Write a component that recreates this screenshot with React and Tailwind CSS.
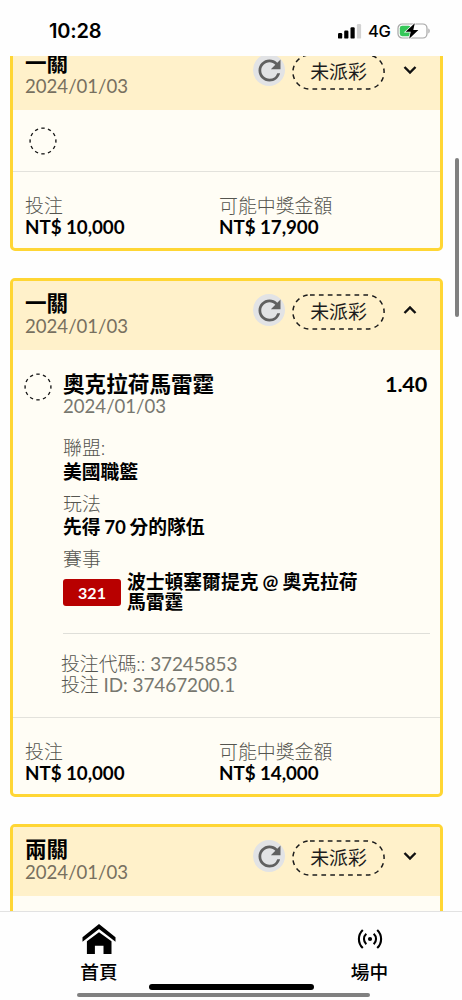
import { useState } from 'react';
import { MdRefresh } from 'react-icons/md';

const bets = [
  {
    id: 1,
    title: '一關',
    date: '2024/01/03',
    stake: 'NT$ 10,000',
    payout: 'NT$ 17,900',
  },
  {
    id: 2,
    title: '一關',
    date: '2024/01/03',
    stake: 'NT$ 10,000',
    payout: 'NT$ 14,000',
    selection: {
      team: '奧克拉荷馬雷霆',
      date: '2024/01/03',
      odds: '1.40',
      league: '美國職籃',
      market: '先得 70 分的隊伍',
      code: '321',
      match: '波士頓塞爾提克 @ 奧克拉荷馬雷霆',
      betCode: '37245853',
      betId: '37467200.1',
    },
  },
  {
    id: 3,
    title: '兩關',
    date: '2024/01/03',
    stake: 'NT$ 10,000',
    payout: 'NT$ 14,000',
  },
];

function StatusBar() {
  return (
    <div className="flex h-[56px] shrink-0 items-start justify-between pt-[20px] pr-[31px] pl-[49px] font-['Inter',sans-serif] text-black">
      <span className="text-[20px] leading-[22px] font-semibold tracking-[-0.2px]">
        10:28
      </span>
      <div className="flex h-[22px] items-center">
        <svg width="24" height="15" viewBox="0 0 24 15">
          <rect x="0" y="9" width="4.2" height="5.6" rx="1.2" />
          <rect x="6.2" y="6.6" width="4.2" height="8" rx="1.2" />
          <rect x="12.5" y="3.3" width="4.2" height="11.3" rx="1.2" />
          <rect x="18.9" y="0" width="4.2" height="14.6" rx="1.2" fill="#d2d2d2" />
        </svg>
        <span className="ml-[6px] w-[24px] text-[16.5px] leading-[22px] font-medium tracking-[-0.3px]">
          4G
        </span>
        <svg className="ml-[5px]" width="34" height="18" viewBox="0 0 34 18">
          <rect x="1" y="2" width="29" height="14" rx="4.2" fill="none" stroke="#a5a5a5" strokeWidth="1.2" />
          <path d="M31.4 6.6c1.7.6 1.7 4.2 0 4.8z" fill="#a5a5a5" />
          <rect x="2.8" y="3.8" width="11" height="10.4" rx="2.4" fill="#35c759" />
          <path
            d="M17.8 1.2 8.6 9.8h5.1l-1.5 7 9.2-8.7h-5.1z"
            stroke="#fff"
            strokeWidth="1.4"
            paintOrder="stroke"
          />
        </svg>
      </div>
    </div>
  );
}

function DashedCircle() {
  return (
    <svg width="28" height="28" viewBox="0 0 28 28" fill="none" className="shrink-0">
      <circle
        cx="14"
        cy="14"
        r="12.9"
        stroke="#1c1c1c"
        strokeWidth="1.4"
        pathLength="120"
        strokeDasharray="5 5"
        strokeDashoffset="2.5"
      />
    </svg>
  );
}

function StatusPill({ children }) {
  return (
    <div className="relative flex h-[36px] w-[93px] items-center justify-center text-[18.9px] leading-[36px] text-[#1c1c1c]">
      <svg className="absolute inset-0" width="93" height="36" viewBox="0 0 93 36" fill="none">
        <rect
          x="0.9"
          y="0.9"
          width="91.2"
          height="34.2"
          rx="17.1"
          stroke="#1c1c1c"
          strokeWidth="1.5"
          strokeDasharray="4.7 4.2"
        />
      </svg>
      {children}
    </div>
  );
}

function Chevron({ open }) {
  return (
    <svg width="14" height="10" viewBox="0 0 14 10" fill="none">
      <path d={open ? 'M1.5 8 7 2.4 12.5 8' : 'M1.5 2 7 7.6 12.5 2'} stroke="#111" strokeWidth="2.4" />
    </svg>
  );
}

function Field({ label, children }) {
  return (
    <div className="h-[55.6px]">
      <div className="text-[18.9px] leading-[23.5px] font-light text-[#55554f]">{label}</div>
      <div className="text-[18.8px] leading-[23.5px] font-bold [word-spacing:-1px]">{children}</div>
    </div>
  );
}

function Selection({ item }) {
  return (
    <div className="h-[367px] pt-[23px] pr-[10px] pl-[11px]">
      <div className="flex">
        <DashedCircle />
        <div className="ml-[11px] flex-1">
          <div className="flex justify-between pr-[2.5px] text-[21.6px] leading-[23px] font-bold">
            <span>{item.team}</span>
            <span className="tracking-[-0.2px]">{item.odds}</span>
          </div>
          <div className="text-[18.6px] leading-[21px] text-[#77776f]">{item.date}</div>
          <div className="mt-[19px]">
            <Field label="聯盟:">{item.league}</Field>
            <Field label="玩法">{item.market}</Field>
            <div className="text-[18.9px] leading-[23.5px] font-light text-[#55554f]">賽事</div>
          </div>
          <div className="mt-[1px] flex items-center">
            <div className="h-[27px] w-[58px] shrink-0 rounded-[3px] bg-[#b80000] text-center text-[16px] leading-[28px] font-bold text-white">
              {item.code}
            </div>
            <div className="ml-[6px] w-[240px] text-[18.8px] leading-[20.7px] font-bold [word-spacing:-0.5px]">
              {item.match}
            </div>
          </div>
          <div className="mt-[20px] border-t border-[#dfdfd9]"></div>
          <div className="mt-[19px] -ml-[2px] text-[18.9px] leading-[21px] tracking-[-0.05px] text-[#77776f]">
            <div>
              <span className="font-light text-[#55554f]">投注代碼::</span> {item.betCode}
            </div>
            <div>
              <span className="font-light text-[#55554f]">投注</span> ID: {item.betId}
            </div>
          </div>
        </div>
      </div>
    </div>
  );
}

function BetCard({ bet }) {
  const [open, setOpen] = useState(Boolean(bet.selection));

  return (
    <div className="mx-[10px] mb-[27px] w-[432.5px] shrink-0 overflow-hidden rounded-[5px] border-3 border-[#ffd634] bg-[#fffdf5]">
      <div className="flex h-[69px] bg-[#fff1ca] pt-[10px] pr-[23px] pl-[12px]">
        <div className="flex-1">
          <div className="text-[21.6px] leading-[24px] font-bold">{bet.title}</div>
          <div className="text-[18.6px] leading-[22px] text-[#77705f]">{bet.date}</div>
        </div>
        <div className="flex h-[38px] items-center">
          <div className="flex h-[32px] w-[32px] items-center justify-center rounded-full bg-[#e2e3e5]">
            <MdRefresh className="shrink-0 text-[#606060]" size={33} />
          </div>
          <div className="mt-[3px] mr-[17.5px] ml-[7px]">
            <StatusPill>未派彩</StatusPill>
          </div>
          <button onClick={() => setOpen(!open)}>
            <Chevron open={open} />
          </button>
        </div>
      </div>
      {open && bet.selection ? (
        <Selection item={bet.selection} />
      ) : (
        <div className="h-[61px] pt-[17px] pl-[15.5px]">
          <DashedCircle />
        </div>
      )}
      <div className="flex h-[77px] border-t border-[#e3e2dc] pt-[24px] pl-[12px] leading-[20.5px]">
        <div className="w-[194px]">
          <div className="text-[18.9px] font-light text-[#55554f]">投注</div>
          <div className="text-[18.8px] font-bold tracking-[-0.05px]">{bet.stake}</div>
        </div>
        <div>
          <div className="text-[18.9px] font-light text-[#55554f]">可能中獎金額</div>
          <div className="text-[18.8px] font-bold tracking-[-0.05px]">{bet.payout}</div>
        </div>
      </div>
    </div>
  );
}

function BottomNav() {
  return (
    <nav className="flex h-[89px] shrink-0 justify-between border-t border-[#e2e2e2] bg-[#fefefe] pr-[72.5px] pl-[79px] text-[18.7px] leading-[24px] font-medium">
      <div className="flex w-[40px] flex-col items-center pt-[12px]">
        <svg width="34" height="30" viewBox="0 0 34 30">
          <path d="M17 0 33.5 13.3v4.4L17 5 .5 17.7v-4.4z" />
          <path d="M17 8.3 29.5 17.3V30h-8v-8.3h-8.6V30h-8V17.3z" />
        </svg>
        <span className="mt-[6px]">首頁</span>
      </div>
      <div className="flex w-[40px] flex-col items-center pt-[17px]">
        <svg width="26" height="20" viewBox="0 0 26 20" fill="none" stroke="#000" strokeWidth="2.1">
          <circle cx="13" cy="10" r="2.1" fill="#000" stroke="none" />
          <path d="M9.3 4.7c-3.1 2.8-3.1 7.8 0 10.6M16.7 4.7c3.1 2.8 3.1 7.8 0 10.6" />
          <path d="M5.8.9c-5.2 5-5.2 13.2 0 18.2M20.2.9c5.2 5 5.2 13.2 0 18.2" />
        </svg>
        <span className="mt-[11px]">場中</span>
      </div>
    </nav>
  );
}

export default function App() {
  return (
    <div className="relative flex h-[1000px] w-[462px] flex-col overflow-hidden bg-[#fefefe] font-['Lato','Noto_Sans_CJK_TC',sans-serif] text-black">
      <StatusBar />
      <main className="flex h-[855px] shrink-0 flex-col overflow-hidden">
        <div className="-mt-[18px] flex flex-col">
          {bets.map((bet) => (
            <BetCard key={bet.id} bet={bet} />
          ))}
        </div>
      </main>
      <BottomNav />
      {/* scroll thumbs and home indicator float over the page */}
      <div className="absolute top-[158px] right-[3px] h-[159px] w-[4px] rounded-full bg-[#808080]"></div>
      <div className="absolute top-[984px] left-[149px] h-[6px] w-[165px] rounded-full bg-black"></div>
      <div className="absolute top-[993px] left-[77px] h-[4px] w-[293px] rounded-full bg-[#808080]"></div>
    </div>
  );
}
